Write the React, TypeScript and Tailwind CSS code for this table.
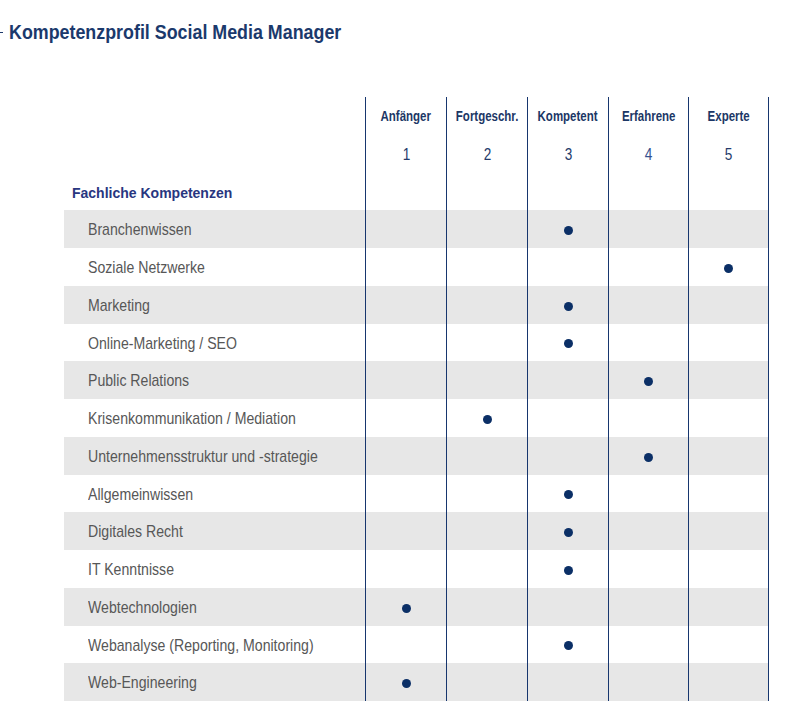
import React from "react";

const arial = { fontFamily: '"Liberation Sans", Arial, sans-serif' };

const levels = [
  { label: "Anfänger", n: 1 },
  { label: "Fortgeschr.", n: 2 },
  { label: "Kompetent", n: 3 },
  { label: "Erfahrene", n: 4 },
  { label: "Experte", n: 5 },
];

const rows: [string, number][] = [
  ["Branchenwissen", 3],
  ["Soziale Netzwerke", 5],
  ["Marketing", 3],
  ["Online-Marketing / SEO", 3],
  ["Public Relations", 4],
  ["Krisenkommunikation / Mediation", 2],
  ["Unternehmensstruktur und -strategie", 4],
  ["Allgemeinwissen", 3],
  ["Digitales Recht", 3],
  ["IT Kenntnisse", 3],
  ["Webtechnologien", 1],
  ["Webanalyse (Reporting, Monitoring)", 3],
  ["Web-Engineering", 1],
];

function Cells({ children }: { children: (i: number) => React.ReactNode }) {
  return (
    <>
      {[0, 1, 2, 3, 4].map((i) => (
        <div
          key={i}
          className={
            "flex items-center justify-center border-l border-[#17366e] " +
            (i === 4 ? "border-r" : "")
          }
        >
          {children(i)}
        </div>
      ))}
    </>
  );
}

export default function App() {
  return (
    <div className="min-h-[720px] bg-white" style={arial}>
      <div className="flex items-center pt-[18px] h-[44px]">
        <div className="w-[3px] h-[1px] bg-[#1d3a6d] mt-[3px]" />
        <h1 className="ml-[6px] text-[21px] font-bold text-[#1b396c] leading-none whitespace-nowrap inline-block origin-left scale-x-[0.85]">
          Kompetenzprofil Social Media Manager
        </h1>
      </div>
      <div className="pl-[64px] pt-[53px]">
        <div className="grid grid-cols-[301px_81px_81px_81px_80px_81px] auto-rows-[37.75px] w-[705px]">
          <div />
          <Cells>
            {(i) => (
              <span className="text-[14px] font-bold text-[#1c3766] pt-[2px] inline-block whitespace-nowrap scale-x-[0.82]">
                {levels[i].label}
              </span>
            )}
          </Cells>
          <div />
          <Cells>
            {(i) => (
              <span
                className={
                  "text-[16px] pt-[2px] inline-block scale-x-[0.85] " +
                  (i === 3 ? "text-[#34508e]" : "text-[#243a6a]")
                }
              >
                {levels[i].n}
              </span>
            )}
          </Cells>
          <div className="flex items-center pl-[8px]">
            <span className="text-[14px] font-bold text-[#28367f] pt-[4px]">Fachliche Kompetenzen</span>
          </div>
          <Cells>{() => null}</Cells>
          {rows.map(([name, lvl], r) => {
            const bg = r % 2 === 0 ? "bg-[#e7e7e7]" : "bg-white";
            return (
              <React.Fragment key={name}>
                <div className={"flex items-center pl-[24px] " + bg}>
                  <span className="text-[17px] text-[#575757] inline-block whitespace-nowrap origin-left scale-x-[0.83] pt-[2px]">
                    {name}
                  </span>
                </div>
                {[0, 1, 2, 3, 4].map((i) => (
                  <div
                    key={i}
                    className={
                      "flex items-center justify-center border-l border-[#17366e] " +
                      bg +
                      (i === 4 ? " border-r" : "")
                    }
                  >
                    {i + 1 === lvl ? (
                      <div className="w-[9px] h-[9px] rounded-full bg-[#0b2f66] mt-[3px]" />
                    ) : null}
                  </div>
                ))}
              </React.Fragment>
            );
          })}
        </div>
      </div>
    </div>
  );
}
